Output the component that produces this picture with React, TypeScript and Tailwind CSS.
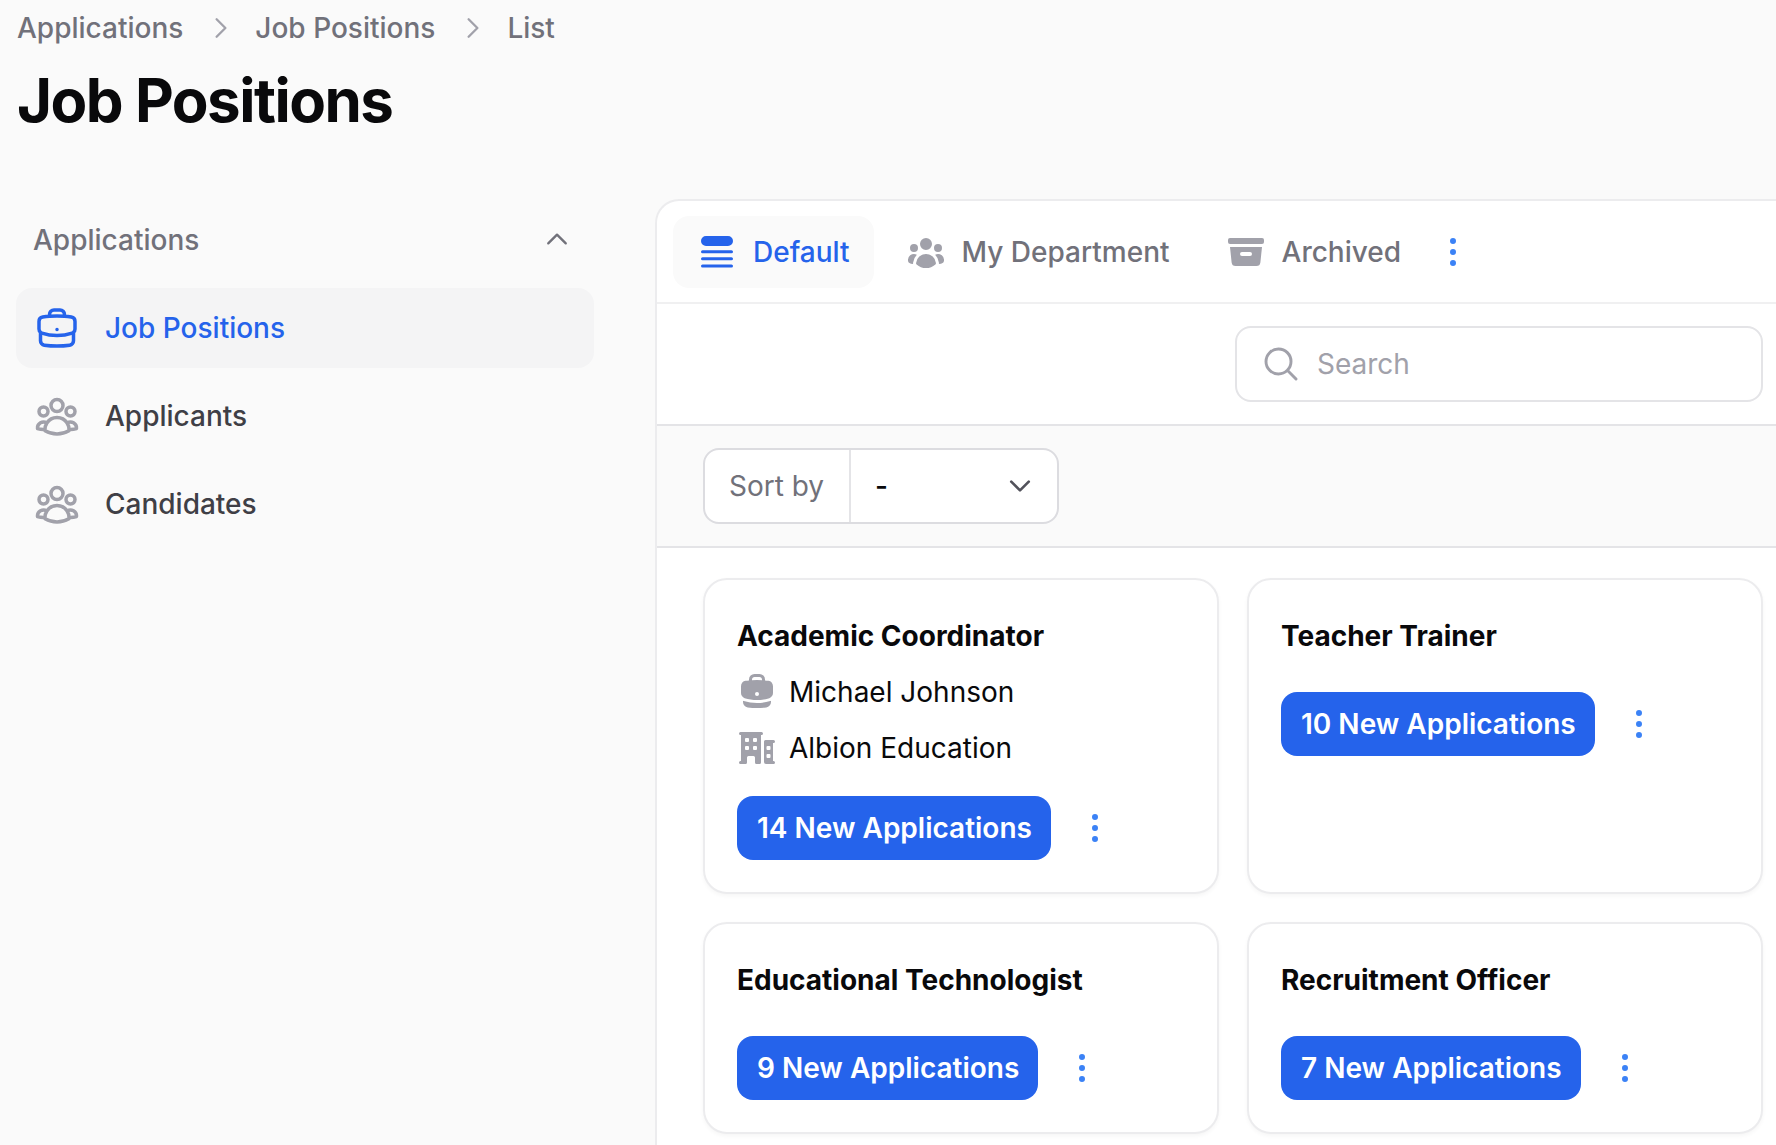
import {
  HiMiniArchiveBox,
  HiMiniBriefcase,
  HiMiniBuildingOffice2,
  HiMiniEllipsisVertical,
  HiMiniQueueList,
  HiMiniUserGroup,
  HiOutlineBriefcase,
  HiOutlineChevronDown,
  HiOutlineChevronRight,
  HiOutlineChevronUp,
  HiOutlineMagnifyingGlass,
  HiOutlineUserGroup,
} from "react-icons/hi2";

interface Job {
  title: string;
  count: number;
  owner?: string;
  company?: string;
}

const JOBS: Job[] = [
  { title: "Academic Coordinator", count: 14, owner: "Michael Johnson", company: "Albion Education" },
  { title: "Teacher Trainer", count: 10 },
  { title: "Educational Technologist", count: 9 },
  { title: "Recruitment Officer", count: 7 },
];

function Crumb({ label, last }: { label: string; last?: boolean }) {
  return (
    <>
      <span>{label}</span>
      {!last && <HiOutlineChevronRight className="mr-[20px] ml-[24px] h-7 w-7 text-[#a1a1aa]" strokeWidth={2} />}
    </>
  );
}

function NavItem({ label, active, icon }: { label: string; active?: boolean; icon: React.ReactNode }) {
  return (
    <div
      className={
        "flex items-center gap-6 rounded-2xl px-[17px] py-4 text-[28px] leading-10 font-medium " +
        (active ? "bg-[#f4f4f5] text-[#2563eb]" : "text-[#3f3f46]")
      }
    >
      {icon}
      {label}
    </div>
  );
}

function JobCard({ job }: { job: Job }) {
  return (
    <div className="rounded-3xl border-2 border-[#ececee] bg-white px-8 pt-9 pb-8 shadow-[0_2px_4px_rgba(0,0,0,0.04)]">
      <h3 className="text-[28px] leading-10 font-bold text-[#09090b]">{job.title}</h3>
      {job.owner && (
        <div className="mt-4 flex flex-col gap-4 text-[28px] leading-10 text-[#09090b]">
          <div className="flex items-center gap-3">
            <HiMiniBriefcase className="h-10 w-10 text-[#a1a1aa]" />
            {job.owner}
          </div>
          <div className="flex items-center gap-3">
            <HiMiniBuildingOffice2 className="h-10 w-10 text-[#a1a1aa]" />
            {job.company}
          </div>
        </div>
      )}
      <div className={"flex items-center gap-[12px] " + (job.owner ? "mt-7" : "mt-9")}>
        <button className="h-16 rounded-2xl bg-[#2563eb] pr-[19px] pl-5 text-[28px] leading-10 font-semibold text-white">
          {job.count} New Applications
        </button>
        <HiMiniEllipsisVertical className="ml-[12px] h-10 w-10 text-[#3b82f6]" />
      </div>
    </div>
  );
}

export default function App() {
  return (
    <div className="flex h-[1145px] w-[1776px] flex-col overflow-hidden bg-[#fafafa] font-['Inter','Liberation_Sans',sans-serif] antialiased">
      <nav className="flex items-center pt-2 pl-[17px] text-[28px] leading-10 font-medium text-[#71717a]">
        <Crumb label="Applications" />
        <Crumb label="Job Positions" />
        <Crumb label="List" last />
      </nav>
      <h1 className="mt-4 pl-[17px] text-[60px] leading-[72px] font-bold tracking-tight text-[#09090b]">
        Job Positions
      </h1>

      <div className="mt-[63px] flex flex-1">
        <aside className="w-[655px] shrink-0 pt-[21px] pr-[61px] pl-4">
          <div className="flex items-center justify-between pr-[23px] pl-[17px] text-[28px] leading-10 font-medium text-[#71717a]">
            Applications
            <HiOutlineChevronUp className="mb-[2px] h-7 w-7 text-[#71717a]" strokeWidth={2} />
          </div>
          <div className="mt-7 flex flex-col gap-2">
            <NavItem active label="Job Positions" icon={<HiOutlineBriefcase className="h-12 w-12 text-[#2563eb]" strokeWidth={1.75} />} />
            <NavItem label="Applicants" icon={<HiOutlineUserGroup className="h-12 w-12 text-[#a1a1aa]" strokeWidth={1.75} />} />
            <NavItem label="Candidates" icon={<HiOutlineUserGroup className="h-12 w-12 text-[#a1a1aa]" strokeWidth={1.75} />} />
          </div>
        </aside>

        <main className="w-[1121px] rounded-tl-3xl border-t-2 border-l-2 border-[#ececee] bg-white">
          <div className="flex items-center gap-2 border-b-2 border-[#f0f0f1] px-4 pt-[15px] pb-[14px] text-[28px] leading-10 font-medium">
            <div className="flex items-center gap-4 rounded-2xl bg-[#fafafa] px-6 py-4 text-[#2563eb]">
              <HiMiniQueueList className="h-10 w-10" />
              Default
            </div>
            <div className="flex items-center gap-4 px-6 py-4 text-[#71717a]">
              <HiMiniUserGroup className="h-10 w-10 text-[#a1a1aa]" />
              My Department
            </div>
            <div className="flex items-center gap-4 px-6 py-4 text-[#71717a]">
              <HiMiniArchiveBox className="h-10 w-10 text-[#a1a1aa]" />
              Archived
            </div>
            <HiMiniEllipsisVertical className="h-10 w-10 text-[#3b82f6]" />
          </div>

          <div className="flex justify-end border-b-2 border-[#e4e4e7] py-[22px] pr-[13px]">
            <div className="flex h-[76px] w-[528px] items-center gap-4 rounded-2xl border-2 border-[#e4e4e7] pl-6 text-[28px] text-[#a1a1aa]">
              <HiOutlineMagnifyingGlass className="h-10 w-10" strokeWidth={1.75} />
              Search
            </div>
          </div>

          <div className="border-b-2 border-[#e4e4e7] bg-[#fafafa] py-[22px] pl-[46px]">
            <div className="flex h-[76px] w-[356px] items-center rounded-2xl border-2 border-[#dcdce0] bg-white text-[28px]">
              <span className="flex h-full items-center border-r-2 border-[#e4e4e7] pr-[25px] pl-6 text-[#71717a]">Sort by</span>
              <span className="flex flex-1 items-center justify-between pr-[23px] pl-6 font-medium text-[#09090b]">
                -
                <HiOutlineChevronDown className="h-7 w-7 text-[#52525b]" strokeWidth={2.25} />
              </span>
            </div>
          </div>

          <div className="grid grid-cols-[516px_516px] gap-x-[28px] gap-y-[28px] pt-[30px] pl-[46px]">
            {JOBS.map((job) => (
              <JobCard key={job.title} job={job} />
            ))}
          </div>
        </main>
      </div>
    </div>
  );
}
